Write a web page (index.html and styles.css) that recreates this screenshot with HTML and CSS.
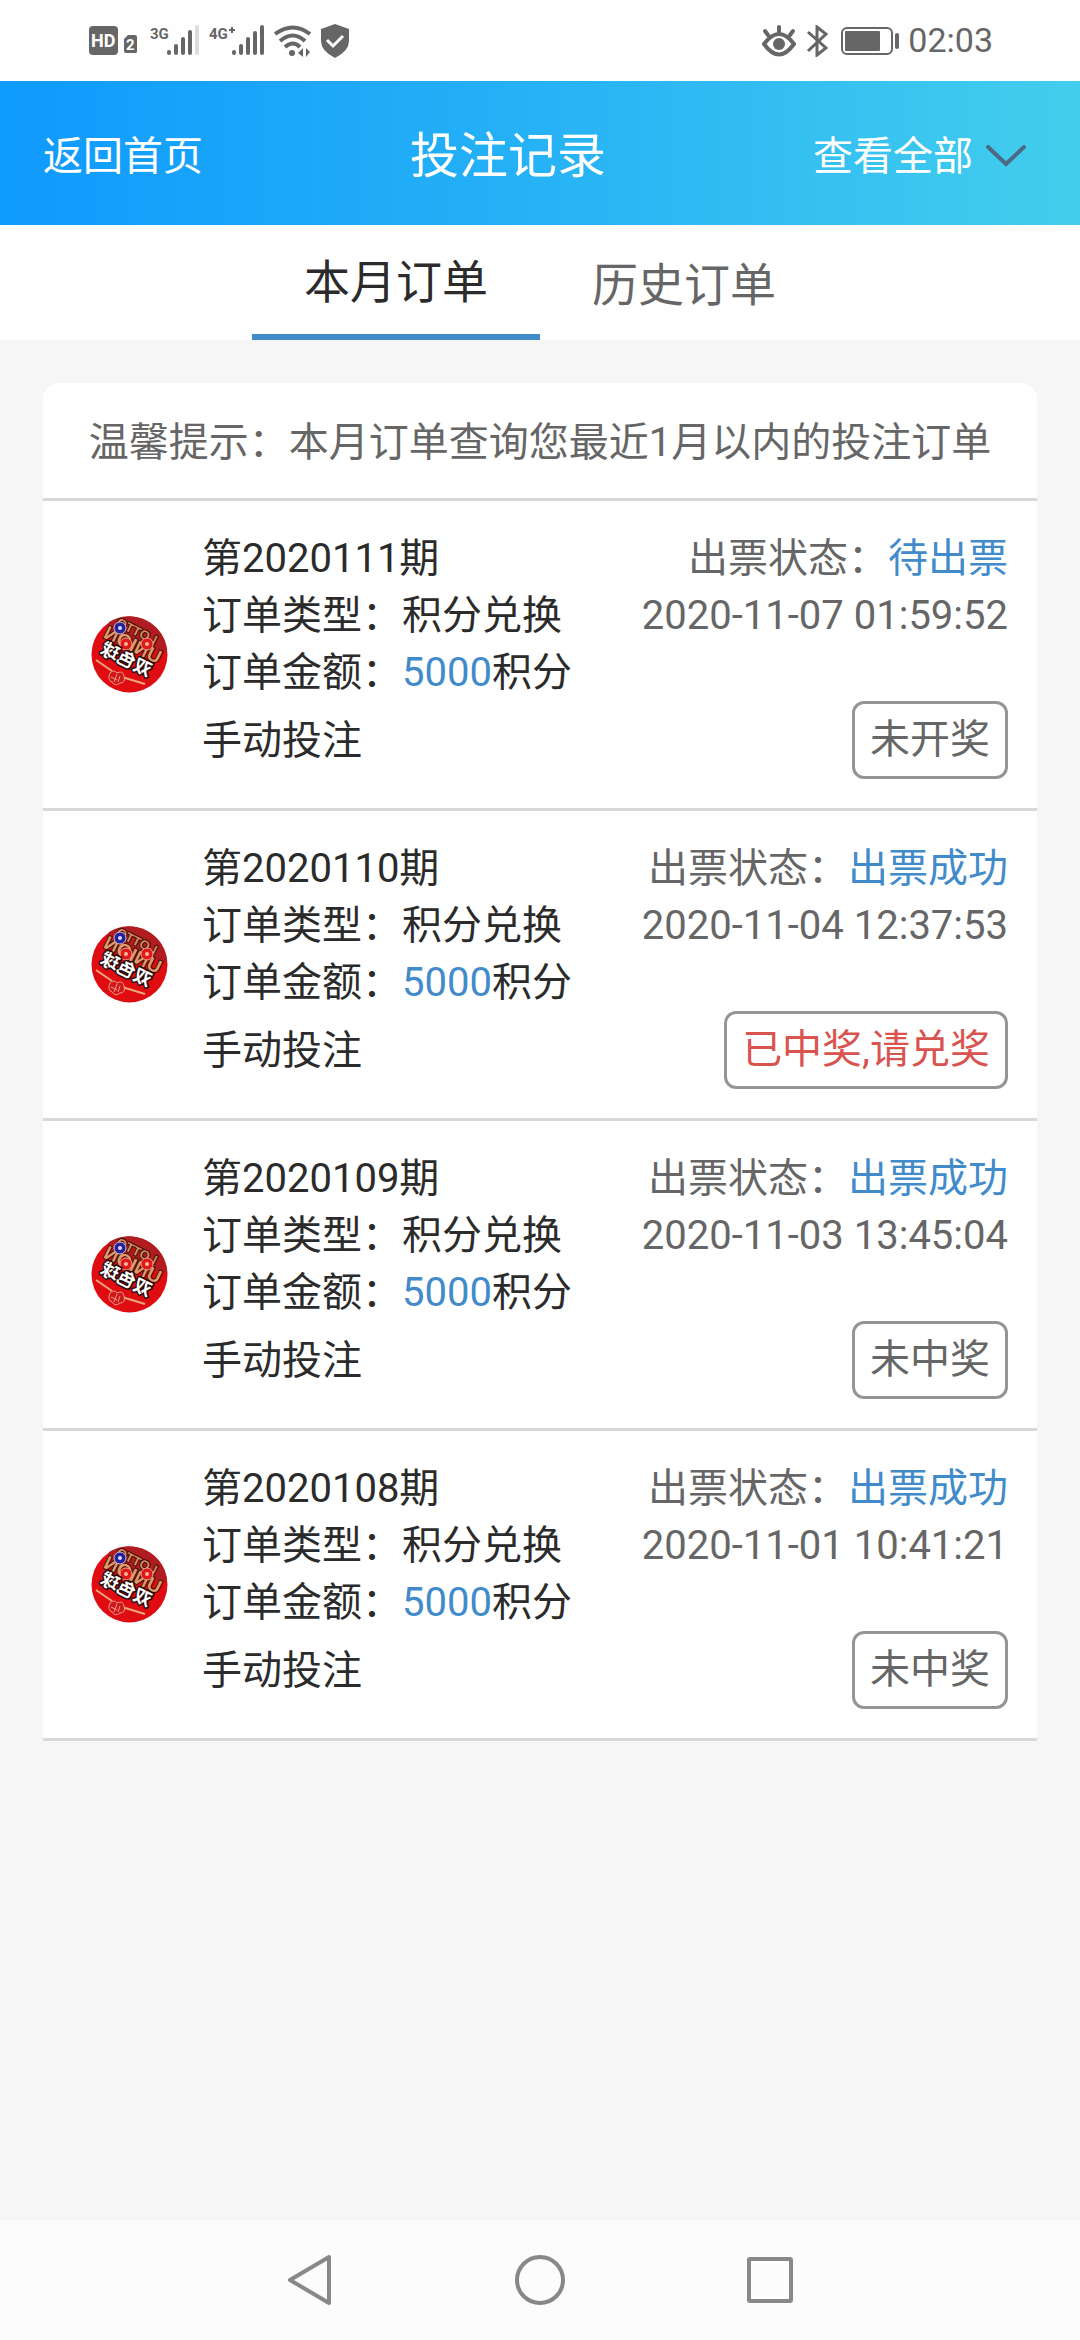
FILE: index.html
```html
<!DOCTYPE html>
<html lang="zh-CN">
<head>
<meta charset="utf-8">
<meta name="viewport" content="width=device-width, initial-scale=1">
<title>投注记录</title>
<link rel="stylesheet" href="styles.css">
</head>
<body>
<svg class="sprite" aria-hidden="true">
  <symbol id="lottery-logo" viewBox="0 0 77 77">
    <circle cx="38.500" cy="38.500" r="38" fill="#df0c12"/>
    <path d="M18 6A38 38 0 0 1 76 36L60 34L14 22Z" fill="#b01c20"/>
    <g transform="translate(77 0) scale(-1 1) rotate(-26 38 38)" font-family="Liberation Sans, Noto Sans CJK SC, sans-serif" font-weight="700" paint-order="stroke" stroke-linejoin="round">
      <text x="20" y="19" font-size="13" fill="#d98a5a" stroke="#3a0c08" stroke-width="2">LOTTO</text>
      <text x="9" y="35" font-size="19" fill="#e09a68" stroke="#3a0c08" stroke-width="2">UNION</text>
    </g>
    <path d="M5 44L21 55M31 61L54 68" fill="none" stroke="#e8a878" stroke-width="2"/>
    <circle cx="29" cy="12" r="6" fill="#22229a" stroke="#d9b8c8" stroke-width="1"/>
    <circle cx="29" cy="12" r="2" fill="#d8d8ff"/>
    <circle cx="35" cy="28" r="6" fill="#e01818" stroke="#f0a090" stroke-width="1"/>
    <circle cx="35" cy="28" r="2" fill="#f8b8a0"/>
    <circle cx="56" cy="28" r="6" fill="#e01818" stroke="#f0a090" stroke-width="1"/>
    <circle cx="56" cy="28" r="2" fill="#f8b8a0"/>
    <g transform="translate(77 0) scale(-1 1) rotate(-26 38 38)" font-family="Noto Sans CJK SC, sans-serif" font-weight="700" paint-order="stroke" stroke-linejoin="round">
      <text x="12" y="51" font-size="18" fill="#fff" stroke="#250808" stroke-width="3">双色球</text>
    </g>
    <path d="M19 57q4-4 7 0q6-3 7 3q2 7-4 7q-5 4-8-1q-5-2-2-9zM20 61l6 3m0-6l-3 8m6-6l-2 6" fill="#d01818" stroke="#f09a88" stroke-width="1"/>
  </symbol>
</svg>

<div class="status-bar">
  <div class="status-group">
    <svg width="48" height="32" viewBox="0 0 48 32" fill="#666" aria-hidden="true">
      <rect x="0" y="1" width="29" height="29" rx="4"/>
      <path d="M35 14L39 10H46Q48 10 48 12V27Q48 28 46 28H37Q35 28 35 26Z"/>
      <g fill="#fff" font-family="Roboto, sans-serif" font-weight="700"><text x="2" y="22" font-size="18">HD</text><text x="37" y="25" font-size="15">2</text></g>
    </svg>
    <svg class="signal-3g" width="49" height="32" viewBox="0 0 49 32" fill="#666" aria-hidden="true">
      <text x="0" y="14" font-size="15" font-weight="700" font-family="Roboto, sans-serif">3G</text>
      <g stroke="#666" stroke-width="4" stroke-linecap="round"><path d="M19 27V28M26 21V28M33 14V28M40 7V28"/><path d="M47 2V28" stroke="#ddd"/></g>
    </svg>
    <svg class="signal-4g" width="56" height="32" viewBox="0 0 56 32" fill="#666" aria-hidden="true">
      <text x="0" y="14" font-size="15" font-weight="700" font-family="Roboto, sans-serif">4G</text>
      <path d="M20 5H26M23 2V8" stroke="#666" stroke-width="2"/>
      <path d="M25 27V28M32 21V28M39 14V28M46 8V28M53 2V28" stroke="#666" stroke-width="4" stroke-linecap="round"/>
    </svg>
    <svg class="wifi" width="38" height="32" viewBox="0 0 38 32" fill="none" stroke="#666" stroke-width="4" aria-hidden="true">
      <path d="M1 9Q19 -4 36 9M6 16Q19 5 31 16M11 22Q19 15 26 22"/>
      <circle cx="18" cy="28" r="3" fill="#666" stroke="none"/>
      <path d="M24 28L29 23V32ZM32 23V32L36 27Z" fill="#666" stroke="none"/>
    </svg>
    <svg class="shield" width="30" height="34" viewBox="0 0 30 34" aria-hidden="true">
      <path d="M15 0L29 5V17Q29 27 15 34Q1 27 1 17V5Z" fill="#666"/><path d="M7 16L13 22L23 12" fill="none" stroke="#fff" stroke-width="3"/>
    </svg>
  </div>
  <div class="status-group">
    <svg width="34" height="32" viewBox="0 0 34 32" fill="none" stroke="#666" stroke-width="4" stroke-linecap="round" aria-hidden="true">
      <path d="M2 19Q17 -1 32 19Q17 40 2 19Z"/><circle cx="17" cy="19" r="6" fill="#666" stroke="none"/><path d="M3 6L6 10M17 2V7M31 6L28 10"/>
    </svg>
    <svg class="bluetooth" width="22" height="32" viewBox="0 0 22 32" fill="none" stroke="#666" stroke-width="3" aria-hidden="true"><path d="M2 7L20 23L11 30V2L20 9L2 26"/></svg>
    <svg class="battery" width="58" height="28" viewBox="0 0 58 28" aria-hidden="true">
      <rect x="1" y="1" width="50" height="26" rx="5" fill="#fff" stroke="#666" stroke-width="2"/><rect x="4" y="4" width="35" height="20" rx="1" fill="#666"/><path d="M56 8V20" stroke="#666" stroke-width="4" stroke-linecap="round"/>
    </svg>
    <time class="clock">02:03</time>
  </div>
</div>

<header class="app-header">
  <a class="header-link" href="#">返回首页</a>
  <h1 class="title">投注记录</h1>
  <button class="filter" type="button">查看全部
    <svg width="42" height="24" viewBox="0 0 42 24" aria-hidden="true"><path d="M3 3L21 20L39 3" fill="none" stroke="#4c6b82" stroke-width="4" stroke-linecap="round"/></svg>
  </button>
</header>

<nav class="tabs">
  <a class="tab tab-active" href="#">本月订单</a>
  <a class="tab" href="#">历史订单</a>
</nav>

<main class="content">
  <section class="card">
    <p class="notice">温馨提示：本月订单查询您最近1月以内的投注订单</p>
    <ul class="orders">
      <li class="order">
        <svg class="logo" aria-hidden="true"><use href="#lottery-logo"/></svg>
        <div class="details">
          <div class="line"><span>第2020111期</span><span class="muted">出票状态：<span class="blue">待出票</span></span></div>
          <div class="line"><span>订单类型：积分兑换</span><time class="muted">2020-11-07 01:59:52</time></div>
          <div class="line"><span>订单金额：<span class="blue">5000</span>积分</span></div>
          <div class="line"><span>手动投注</span><button class="result" type="button">未开奖</button></div>
        </div>
      </li>
      <li class="order">
        <svg class="logo" aria-hidden="true"><use href="#lottery-logo"/></svg>
        <div class="details">
          <div class="line"><span>第2020110期</span><span class="muted">出票状态：<span class="blue">出票成功</span></span></div>
          <div class="line"><span>订单类型：积分兑换</span><time class="muted">2020-11-04 12:37:53</time></div>
          <div class="line"><span>订单金额：<span class="blue">5000</span>积分</span></div>
          <div class="line"><span>手动投注</span><button class="result result-won" type="button">已中奖,请兑奖</button></div>
        </div>
      </li>
      <li class="order">
        <svg class="logo" aria-hidden="true"><use href="#lottery-logo"/></svg>
        <div class="details">
          <div class="line"><span>第2020109期</span><span class="muted">出票状态：<span class="blue">出票成功</span></span></div>
          <div class="line"><span>订单类型：积分兑换</span><time class="muted">2020-11-03 13:45:04</time></div>
          <div class="line"><span>订单金额：<span class="blue">5000</span>积分</span></div>
          <div class="line"><span>手动投注</span><button class="result" type="button">未中奖</button></div>
        </div>
      </li>
      <li class="order">
        <svg class="logo" aria-hidden="true"><use href="#lottery-logo"/></svg>
        <div class="details">
          <div class="line"><span>第2020108期</span><span class="muted">出票状态：<span class="blue">出票成功</span></span></div>
          <div class="line"><span>订单类型：积分兑换</span><time class="muted">2020-11-01 10:41:21</time></div>
          <div class="line"><span>订单金额：<span class="blue">5000</span>积分</span></div>
          <div class="line"><span>手动投注</span><button class="result" type="button">未中奖</button></div>
        </div>
      </li>
    </ul>
  </section>
</main>

<nav class="system-nav" aria-label="系统导航">
  <button type="button" aria-label="返回"><svg width="50" height="54" viewBox="0 0 50 54"><path d="M44 4V50L5 27Z"/></svg></button>
  <button type="button" aria-label="主页"><svg width="50" height="54" viewBox="0 0 50 54"><circle cx="25" cy="27" r="23"/></svg></button>
  <button type="button" aria-label="最近任务"><svg width="50" height="54" viewBox="0 0 50 54"><rect x="4" y="6" width="42" height="42" rx="1"/></svg></button>
</nav>
</body>
</html>
```

FILE: styles.css
```css
* {
  box-sizing: border-box;
}

body {
  display: flex;
  flex-direction: column;
  min-height: 100vh;
  margin: 0;
  background: #f6f6f6;
  color: #2b2b2b;
  font-family: Roboto, "Noto Sans CJK SC", sans-serif;
  font-size: 40px;
  line-height: 57px;
}

a {
  color: inherit;
  text-decoration: none;
}

button {
  padding: 0;
  border: 0;
  background: none;
  color: inherit;
  font: inherit;
}

svg {
  display: block;
  flex: none;
}

.sprite {
  display: none;
}

.status-bar {
  display: flex;
  justify-content: space-between;
  align-items: center;
  height: 81px;
  padding: 0 87px 0 89px;
  background: #fefefe;
}

.status-group {
  display: flex;
  align-items: center;
}

.signal-3g {
  margin-left: 13px;
}

.signal-4g {
  margin-left: 10px;
}

.wifi {
  margin-left: 9px;
}

.shield {
  margin-left: 8px;
}

.bluetooth {
  margin-left: 10px;
}

.battery {
  margin-left: 13px;
}

.clock {
  margin-left: 9px;
  color: #666;
  font-size: 34px;
}

.app-header {
  display: flex;
  justify-content: space-between;
  align-items: center;
  height: 144px;
  padding: 6px 53px 0 43px;
  background: linear-gradient(90deg, #0f9afe, #26b2f5 50%, #43ceed);
  color: #fff;
}

.title {
  margin: 0;
  font-size: 49px;
  font-weight: 400;
}

.filter {
  display: flex;
  align-items: center;
  gap: 12px;
}

.tabs {
  display: flex;
  justify-content: center;
  height: 115px;
  background: #fff;
  color: #666;
  font-size: 46px;
}

.tab {
  display: flex;
  justify-content: center;
  align-items: center;
  width: 288px;
  padding-top: 5px;
}

.tab-active {
  border-bottom: 6px solid #428bca;
  color: #2b2b2b;
}

.content {
  flex: 1;
  padding: 43px;
}

.card {
  overflow: hidden;
  border-radius: 16px 16px 0 0;
  background: #fff;
}

.notice {
  margin: 0;
  padding: 31px 0 27px;
  border-bottom: 3px solid #d8d8d8;
  color: #666;
  text-align: center;
}

.orders {
  margin: 0;
  padding: 0;
  list-style: none;
}

.order {
  display: flex;
  align-items: center;
  gap: 34px;
  padding: 29px 29px 29px 48px;
  border-bottom: 3px solid #d8d8d8;
}

.logo {
  width: 77px;
  height: 77px;
}

.details {
  flex: 1;
}

.line {
  display: flex;
  justify-content: space-between;
  align-items: center;
}

.muted {
  color: #666;
}

.blue {
  color: #428bca;
}

.result {
  padding: 9px 15px;
  border: 3px solid #959595;
  border-radius: 12px;
  color: #666;
  line-height: 54px;
}

.result-won {
  color: #d9534f;
}

.system-nav {
  display: flex;
  justify-content: center;
  align-items: center;
  gap: 180px;
  height: 120px;
  background: #fcfcfc;
}

.system-nav svg {
  fill: none;
  stroke: #888;
  stroke-width: 4;
  stroke-linejoin: round;
}
```
